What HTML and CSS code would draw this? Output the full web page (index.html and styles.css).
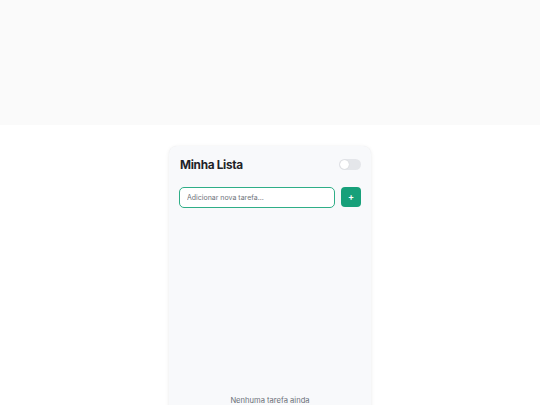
FILE: index.html
```html
<!DOCTYPE html>
<html lang="pt">
<head>
<meta charset="utf-8">
<title>Minha Lista</title>
<link rel="stylesheet" href="styles.css">
</head>
<body>
<header class="top-band"></header>
<main class="page">
  <section class="card">
    <div class="card-header">
      <h1 class="title">Minha Lista</h1>
      <span class="toggle"><span class="knob"></span></span>
    </div>
    <form class="add-row">
      <input class="add-input" type="text" placeholder="Adicionar nova tarefa...">
      <button class="add-btn" type="button">+</button>
    </form>
    <div class="list-area"></div>
    <p class="empty">Nenhuma tarefa ainda</p>
  </section>
</main>
</body>
</html>
```

FILE: styles.css
```css
* { box-sizing: border-box; }
html, body {
  margin: 0;
  padding: 0;
  background: #ffffff;
  font-family: Inter, "Noto Sans", sans-serif;
}
.top-band {
  height: 125px;
  background: #fafafa;
}
.page {
  display: flex;
  justify-content: center;
  padding-top: 21px;
}
.card {
  width: 202px;
  min-height: 300px;
  background: #f8f9fb;
  border-radius: 8px;
  box-shadow: 0 1px 4px rgba(0,0,0,0.08), 0 0 1px rgba(0,0,0,0.06);
  padding: 10px 10px 20px;
}
.card-header {
  display: flex;
  align-items: center;
  justify-content: space-between;
  height: 17px;
}
.title {
  margin: 0 0 0 1px;
  font-size: 11.8px;
  font-weight: 700;
  color: #1f2328;
  letter-spacing: -0.3px;
}
.toggle {
  position: relative;
  display: block;
  width: 22px;
  height: 11px;
  border-radius: 6px;
  background: #e4e6ea;
}
.knob {
  position: absolute;
  left: 1px;
  top: 1px;
  width: 9px;
  height: 9px;
  border-radius: 50%;
  background: #ffffff;
  box-shadow: 0 0 1px rgba(0,0,0,0.2);
}
.add-row {
  display: flex;
  gap: 6px;
  margin: 14px 0 0;
}
.add-input {
  flex: 1;
  height: 21px;
  border: 1.5px solid #2fae87;
  border-radius: 5px;
  background: #ffffff;
  padding: 0 7px;
  font-family: inherit;
  font-size: 7px;
  color: #333;
  outline: none;
}
.add-input::placeholder { color: #6e737a; }
.add-btn {
  width: 20px;
  height: 20px;
  border: none;
  border-radius: 4px;
  background: #17a07a;
  color: #ffffff;
  font-family: inherit;
  font-size: 9px;
  font-weight: 700;
  padding: 0;
  line-height: 20px;
}
.list-area {
  height: 188px;
}
.empty {
  margin: 0;
  text-align: center;
  font-size: 7.6px;
  color: #6b7078;
}
```
